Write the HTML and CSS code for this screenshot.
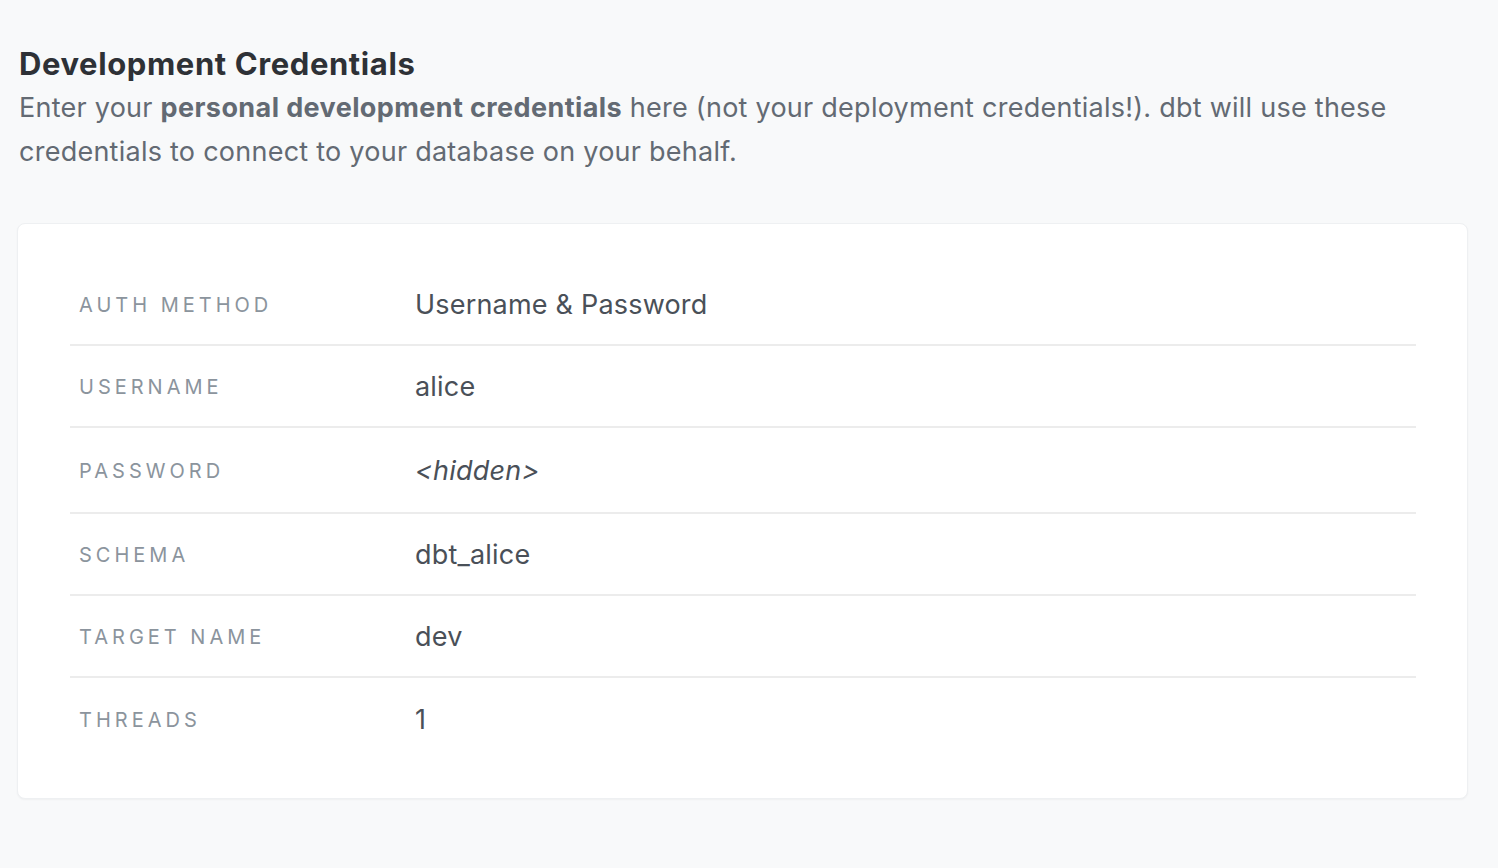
FILE: index.html
```html
<!DOCTYPE html>
<html lang="en">
<head>
<meta charset="utf-8">
<title>Development Credentials</title>
<link rel="stylesheet" href="styles.css">
</head>
<body>
<main class="page">
  <h1 class="title">Development Credentials</h1>
  <p class="intro">Enter your <strong>personal development credentials</strong> here (not your deployment credentials!). dbt will use these credentials to connect to your database on your behalf.</p>
  <section class="card">
    <div class="row">
      <div class="label">Auth Method</div>
      <div class="value">Username &amp; Password</div>
    </div>
    <div class="row">
      <div class="label">Username</div>
      <div class="value">alice</div>
    </div>
    <div class="row row-tall">
      <div class="label">Password</div>
      <div class="value value-hidden">&lt;hidden&gt;</div>
    </div>
    <div class="row">
      <div class="label">Schema</div>
      <div class="value">dbt_alice</div>
    </div>
    <div class="row">
      <div class="label">Target Name</div>
      <div class="value">dev</div>
    </div>
    <div class="row">
      <div class="label">Threads</div>
      <div class="value">1</div>
    </div>
  </section>
</main>
</body>
</html>
```

FILE: styles.css
```css
html, body {
  margin: 0;
  padding: 0;
  background: #f8f9fa;
}

body {
  font-family: Inter, "Noto Sans", "Liberation Sans", sans-serif;
  color: #5f656d;
}

.page {
  padding: 42px 30px 70px 17px;
}

.title {
  margin: 0 0 0 2px;
  font-size: 31px;
  line-height: 44px;
  font-weight: 700;
  letter-spacing: 0.6px;
  color: #2e3136;
}

.intro {
  margin: 0 0 49px 2px;
  font-size: 27px;
  line-height: 44px;
  letter-spacing: 0.25px;
  color: #636a73;
}

.intro strong {
  font-weight: 700;
  letter-spacing: 0.4px;
}

.card {
  background: #ffffff;
  border: 1px solid #eef0f2;
  border-radius: 8px;
  box-shadow: 0 1px 2px rgba(0, 0, 0, 0.04);
  padding: 40px 51px 38px 52px;
}

.row {
  display: grid;
  grid-template-columns: 336px 1fr;
  align-items: center;
  height: 82px;
  padding-left: 9px;
  border-bottom: 2px solid #ececec;
  box-sizing: border-box;
}

.row:last-child {
  border-bottom: none;
}

.row-tall {
  height: 86px;
}

.label {
  padding-top: 1px;
  font-size: 20px;
  letter-spacing: 0.2em;
  text-transform: uppercase;
  color: #8b949d;
  font-weight: 400;
}

.value {
  font-size: 27px;
  letter-spacing: 0.2px;
  color: #4a5058;
}

.value-hidden {
  font-style: italic;
}
```
